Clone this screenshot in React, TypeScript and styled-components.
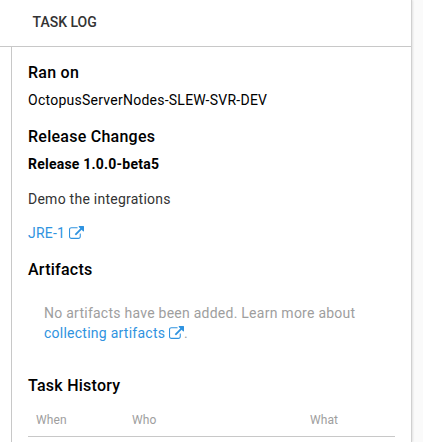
import React from "react";
import styled, { createGlobalStyle } from "styled-components";

const GlobalStyle = createGlobalStyle`
  *, *::before, *::after { box-sizing: border-box; }
  body { margin: 0; background: #fafafa; overflow: hidden; }
`;

const Page = styled.div`
  height: 442px;
  overflow: hidden;
  background: #fafafa;
  color: #000;
  font-family: Roboto, "Liberation Sans", sans-serif;
  font-size: 14px;
  line-height: 20px;
`;

const Paper = styled.main`
  display: flex;
  flex-direction: column;
  width: 412px;
  height: 100%;
  background: #fff;
  border-right: 1px solid #d0d0d0;
  box-shadow: 1px 0 2px rgba(0, 0, 0, 0.1);
`;

const TabBar = styled.nav`
  display: flex;
  align-items: center;
  flex: none;
  height: 47px;
  padding: 0 32.5px 3px;
  border-bottom: 1px solid #c8c8c8;
`;

const Tab = styled.span`
  color: #333;
  font-weight: 500;
`;

const Summary = styled.section`
  flex: 1;
  margin-left: 11px;
  padding: 16px 16px 0;
  border-left: 1px solid #c8c8c8;
`;

const Heading = styled.h4<{ $top?: number; $bottom?: number }>`
  margin: ${({ $top = 0 }) => $top}px 0 ${({ $bottom = 7 }) => $bottom}px;
  font-size: 16px;
  font-weight: 500;
  line-height: 20px;
  letter-spacing: 0.25px;
`;

const Line = styled.p<{ $top?: number; $strong?: boolean; $spacing?: number; $color?: string }>`
  margin: ${({ $top = 0 }) => $top}px 0 0;
  color: ${({ $color = "#000" }) => $color};
  font-weight: ${({ $strong }) => ($strong ? 700 : 400)};
  letter-spacing: ${({ $spacing = 0 }) => $spacing}px;
`;

const Note = styled.p`
  margin: 23px 16px 0;
  color: #9e9e9e;
  letter-spacing: 0.25px;
`;

const Anchor = styled.a`
  color: #2f93e0;
  text-decoration: none;
`;

const LinkIcon = styled.svg`
  width: 15px;
  height: 13px;
  vertical-align: -1px;
  fill: currentColor;
`;

const HeaderRow = styled.div`
  display: grid;
  grid-template-columns: 96px 178px 1fr;
  height: 32px;
  padding: 6px 8px 0;
  border-bottom: 1px solid #c8c8c8;
  color: #9e9e9e;
  font-size: 12px;
  line-height: 18px;
  letter-spacing: 0.1px;
`;

function ExternalLink({ children }: { children: React.ReactNode }) {
  return (
    <Anchor href="#">
      {children}{" "}
      <LinkIcon viewBox="0 0 1792 1536" aria-hidden="true">
        <path d="M1408 928v320q0 119-84.500 203.500T1120 1536H288q-119 0-203.500-84.500T0 1248V416q0-119 84.500-203.500T288 128h704q14 0 23 9t9 23v64q0 14-9 23t-23 9H288q-66 0-113 47t-47 113v832q0 66 47 113t113 47h832q66 0 113-47t47-113V928q0-14 9-23t23-9h64q14 0 23 9t9 23zm384-864v512q0 26-19 45t-45 19-45-19l-176-176-652 652q-10 10-23 10t-23-10l-114-114q-10-10-10-23t10-23l652-652-176-176q-19-19-19-45t19-45 45-19h512q26 0 45 19t19 45z" />
      </LinkIcon>
    </Anchor>
  );
}

export default function App() {
  return (
    <Page>
      <GlobalStyle />
      <Paper>
        <TabBar>
          <Tab>TASK LOG</Tab>
        </TabBar>
        <Summary>
          <Heading>Ran on</Heading>
          <Line $spacing={0.25}>OctopusServerNodes-SLEW-SVR-DEV</Line>
          <Heading $top={17}>Release Changes</Heading>
          <Line $strong $spacing={0.22}>Release 1.0.0-beta5</Line>
          <Line $top={15} $color="#333" $spacing={0.25}>Demo the integrations</Line>
          <Line $top={14} $spacing={0.2}>
            <ExternalLink>JRE-1</ExternalLink>
          </Line>
          <Heading $top={17}>Artifacts</Heading>
          <Note>
            No artifacts have been added. Learn more about{" "}
            <ExternalLink>collecting artifacts</ExternalLink>.
          </Note>
          <Heading $top={33} $bottom={9}>Task History</Heading>
          <HeaderRow>
            <span>When</span>
            <span>Who</span>
            <span>What</span>
          </HeaderRow>
        </Summary>
      </Paper>
    </Page>
  );
}
